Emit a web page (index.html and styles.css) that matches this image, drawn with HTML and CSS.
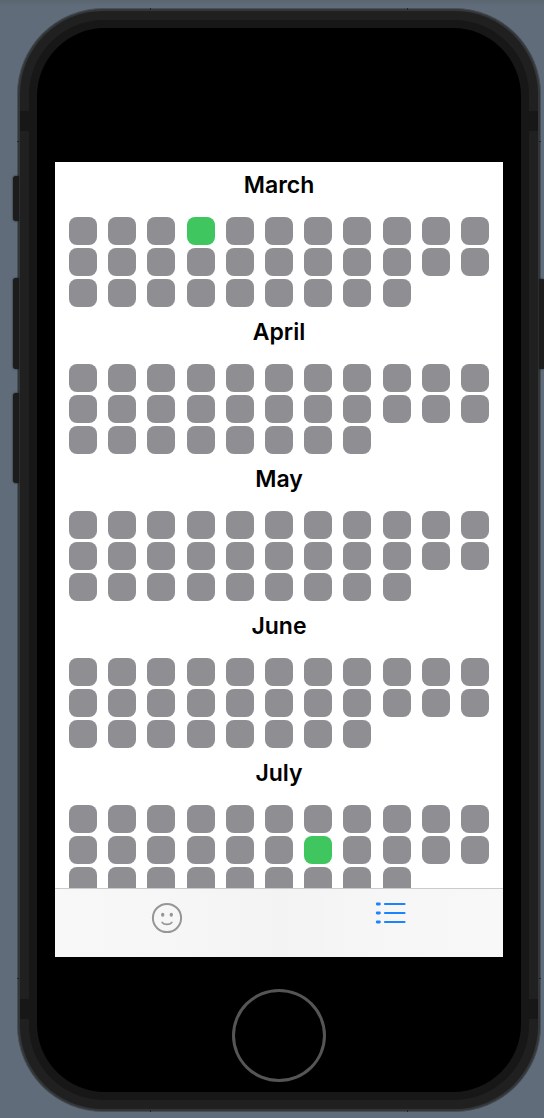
FILE: index.html
```html
<!DOCTYPE html>
<html lang="en">
<head>
<meta charset="utf-8">
<meta name="viewport" content="width=device-width, initial-scale=1">
<title>Calendar</title>
<link rel="stylesheet" href="styles.css">
</head>
<body>
<div class="phone">
  <span class="side-key side-key--mute"></span>
  <span class="side-key side-key--up"></span>
  <span class="side-key side-key--down"></span>
  <span class="side-key side-key--power"></span>
  <span class="seam seam--left"></span>
  <span class="seam seam--right"></span>
  <span class="seam seam--top"></span>
  <span class="seam seam--bottom"></span>
  <div class="band">
    <span class="antenna antenna--top"></span>
    <span class="antenna antenna--bottom"></span>
    <div class="rim">
      <div class="face">
        <div class="screen">
          <main class="months" id="months"></main>
          <nav class="tabs">
            <button class="tab" type="button" aria-label="Mood">
              <svg class="tab-icon" viewBox="0 0 32 32" fill="none" stroke="currentColor" stroke-linecap="round">
                <circle cx="16" cy="16" r="14.1" stroke-width="2"/>
                <path d="M11.2 20.4c2 2.7 7.6 2.7 9.6 0" stroke-width="1.7"/>
                <ellipse cx="11.7" cy="12.8" rx="1.7" ry="2" fill="currentColor" stroke="none"/>
                <ellipse cx="20.3" cy="12.8" rx="1.7" ry="2" fill="currentColor" stroke="none"/>
              </svg>
            </button>
            <button class="tab tab--active" type="button" aria-label="List" aria-current="page">
              <svg class="tab-icon" viewBox="0 0 32 32" fill="none" stroke="currentColor" stroke-linecap="round">
                <path d="M10 2h19.5M10 11h19.5M10 20h19.5" stroke-width="2.2"/>
                <path d="M2.2 2h2.2M2.2 11h2.2M2.2 20h2.2" stroke-width="2.8"/>
              </svg>
            </button>
          </nav>
        </div>
        <button class="home" type="button" aria-label="Home"></button>
      </div>
    </div>
  </div>
</div>
<script src="app.js"></script>
</body>
</html>
```
FILE: styles.css
```css
* {
  box-sizing: border-box;
}

body {
  display: flex;
  height: 100vh;
  margin: 0;
  padding: 8px 3px 6px 17px;
  overflow: hidden;
  background: linear-gradient(#5a656f, #606c7a 6px);
  font-family: Inter, "Liberation Sans", sans-serif;
}

button {
  padding: 0;
  border: 0;
  background: none;
}

.phone {
  position: relative;
  display: flex;
  flex: 1;
  border: 1px solid #46505a;
  border-radius: 86px;
  background: #343637;
  padding: 2px;
}

.band {
  position: relative;
  display: flex;
  flex: 1;
  padding: 9px;
  border-radius: 83px;
  background: #202020;
}

.rim {
  position: relative;
  display: flex;
  flex: 1;
  padding: 8px;
  border-radius: 75px;
  background: #171717;
}

.face {
  display: flex;
  flex: 1;
  flex-direction: column;
  align-items: center;
  padding: 134px 18px 10px;
  border-radius: 68px;
  background: #000;
}

.side-key {
  position: absolute;
  left: -5px;
  width: 6px;
  border-radius: 3px 0 0 3px;
  background: #1c1c1c;
  box-shadow: 0 0 2px #1c1c1c;
}

.side-key--mute {
  top: 167px;
  height: 45px;
}

.side-key--up {
  top: 269px;
  height: 91px;
}

.side-key--down {
  top: 384px;
  height: 90px;
}

.side-key--power {
  top: 270px;
  right: -5px;
  left: auto;
  height: 90px;
  border-radius: 0 3px 3px 0;
}

.antenna {
  position: absolute;
  right: 0;
  left: 0;
  height: 20px;
  background: #171717;
}

.antenna--top {
  top: 100px;
}

.antenna--bottom {
  bottom: 90px;
}

.seam {
  position: absolute;
  border: 0 solid #202428;
}

.seam--left,
.seam--right {
  top: 132px;
  bottom: 132px;
  width: 2px;
  border-width: 1px 0;
}

.seam--left {
  left: -1px;
}

.seam--right {
  right: -1px;
}

.seam--top,
.seam--bottom {
  right: 132px;
  left: 132px;
  height: 2px;
  border-width: 0 1px;
}

.seam--top {
  top: -1px;
}

.seam--bottom {
  bottom: -1px;
}

.screen {
  display: flex;
  flex: 1;
  flex-direction: column;
  width: 100%;
  min-height: 0;
  background: #fff;
}

.months {
  display: flex;
  flex: 1;
  flex-direction: column;
  gap: 10px;
  min-height: 0;
  padding: 8px 14px 0;
  overflow: hidden;
}

.month {
  flex: none;
}

.month-name {
  margin: 0 0 17px;
  color: #000;
  font-size: 23px;
  font-weight: 600;
  line-height: 30px;
  text-align: center;
}

.days {
  display: grid;
  grid-template-columns: repeat(11, 28px);
  justify-content: space-between;
  row-gap: 3px;
}

.day {
  height: 28px;
  border-radius: 8px;
  background: #8e8e93;
}

.day--done {
  background: #3fc65f;
}

.tabs {
  display: flex;
  flex: none;
  border-top: 1px solid #cbcbcc;
  background: linear-gradient(90deg, #f8f8f8, #f6f6f6 30%, #f3f3f3 50%, #f6f6f6 70%, #f8f8f8);
}

.tab {
  flex: 1;
  padding: 13px 0 23px;
  color: #969696;
}

.tab--active {
  color: #1a84ff;
}

.tab-icon {
  display: block;
  width: 32px;
  height: 32px;
  margin: 0 auto;
}

.home {
  flex: none;
  width: 94px;
  height: 93px;
  margin-top: 32px;
  border: 3px solid #555;
  border-radius: 50%;
}
```
FILE: app.js
```js
const months = [
  { name: "March", days: 31, done: [4] },
  { name: "April", days: 30, done: [] },
  { name: "May", days: 31, done: [] },
  { name: "June", days: 30, done: [] },
  { name: "July", days: 31, done: [18] },
];

const list = document.getElementById("months");

for (const month of months) {
  const section = document.createElement("section");
  section.className = "month";

  const title = document.createElement("h2");
  title.className = "month-name";
  title.textContent = month.name;

  const days = document.createElement("div");
  days.className = "days";
  for (let day = 1; day <= month.days; day++) {
    const cell = document.createElement("span");
    cell.className = month.done.includes(day) ? "day day--done" : "day";
    days.append(cell);
  }

  section.append(title, days);
  list.append(section);
}
```
